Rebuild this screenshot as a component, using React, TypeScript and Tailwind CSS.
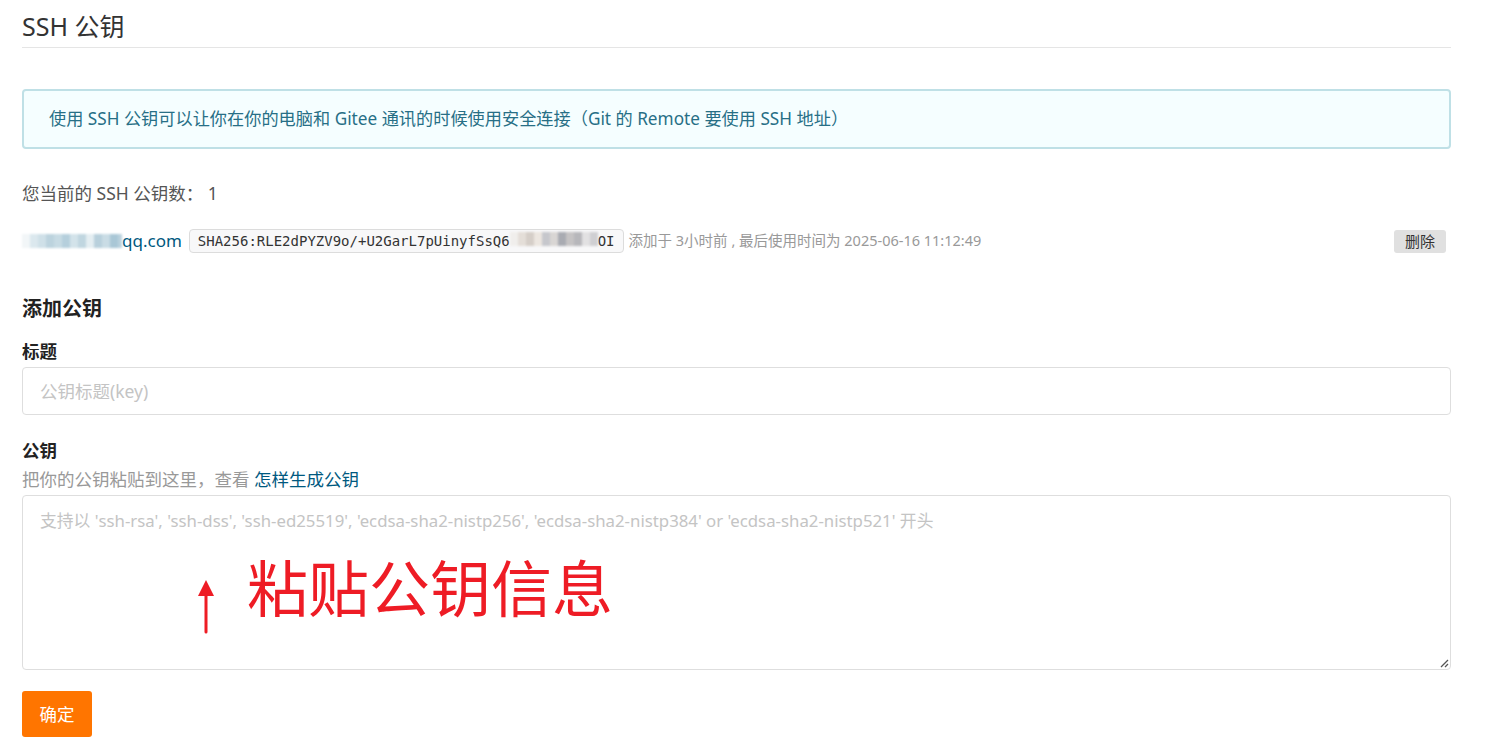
import React from "react";

const font = { fontFamily: '"Noto Sans", "Noto Sans CJK SC", sans-serif' };

function Mosaic({ colors, h = 18 }: { colors: string[]; h?: number }) {
  return (
    <span className="inline-flex items-center">
      {colors.map((c, i) => (
        <span key={i} className="inline-block w-[8px] shrink-0" style={{ background: c, height: h }} />
      ))}
    </span>
  );
}

export default function App() {
  const emailColors = ["#f2f6f8", "#dbe8ee", "#cfe0e8", "#bcd3de", "#c7dbe4", "#b5cfdc", "#d3e3ea", "#c0d6e0", "#e4eef2", "#b8d0dc", "#c9dce5", "#a9c7d6", "#bad2de"];
  const hashColors = ["#f0eeec", "#e4ded8", "#d5cec8", "#ece6e0", "#c6c7cc", "#d9d6d4", "#a9abb2", "#c5c3c4", "#b7b7bb", "#e2e1e2", "#cfcfd2"];
  return (
    <div className="w-[1499px] h-[753px] bg-white text-[#333]" style={font}>
      <div className="ml-[22px] w-[1429px]">
        <div className="pt-[10px] pb-[4px] border-b border-[#e5e5e5]">
          <h2 className="text-[25px] leading-[33px] text-[#333]">SSH 公钥</h2>
        </div>

        <div className="mt-[41px] h-[60px] flex items-center px-[25px] bg-[#f5feff] border-2 border-[#bfe0e6] rounded-[4px] text-[17.2px] text-[#276f86]">
          使用 SSH 公钥可以让你在你的电脑和 Gitee 通讯的时候使用安全连接（Git 的 Remote 要使用 SSH 地址）
        </div>

        <div className="mt-[32px] text-[17.5px] leading-[24px] text-[#555]">您当前的 SSH 公钥数：&nbsp;1</div>

        <div className="mt-[24px] flex items-center h-[24px]">
          <span className="inline-flex items-center text-[17px] text-[#005980]">
            <span className="blur-[1px] w-[100px] overflow-hidden inline-flex"><Mosaic colors={emailColors} h={14} /></span>
            <span>qq.com</span>
          </span>
          <span
            className="ml-[7px] inline-flex items-center h-[24px] px-[8px] bg-[#f8f8f9] border border-[#dcdcdc] rounded-[4px] text-[14px] text-[#333]"
            style={{ fontFamily: '"DejaVu Sans Mono", monospace' }}
          >
            SHA256:RLE2dPYZV9o/+U2GarL7pUinyfSsQ6
            <span className="blur-[1px]"><Mosaic colors={hashColors} h={14} /></span>
            OI
          </span>
          <span className="ml-[5px] text-[14.5px] text-[#999]">添加于 3小时前 , 最后使用时间为 2025-06-16 11:12:49</span>
          <button className="ml-auto mr-[5px] h-[23px] px-[11px] bg-[#e0e0e0] rounded-[3px] text-[15px] leading-[23px] text-[#333]">删除</button>
        </div>

        <div className="mt-[44px] text-[20px] leading-[24px] font-bold text-[#222]">添加公钥</div>
        <div className="mt-[20px] text-[17.5px] leading-[20px] font-bold text-[#222]">标题</div>
        <div className="mt-[6px] h-[48px] border border-[#dedede] rounded-[4px] flex items-center px-[17px] text-[17.5px] text-[#c4c4c4]">
          公钥标题(key)
        </div>

        <div className="mt-[25px] text-[17.5px] leading-[20px] font-bold text-[#222]">公钥</div>
        <div className="mt-[9px] text-[17.5px] leading-[20px] text-[#999]">
          把你的公钥粘贴到这里，查看 <span className="text-[#005980]">怎样生成公钥</span>
        </div>
        <div className="relative mt-[6px] h-[175px] border border-[#dedede] rounded-[4px] px-[17px] pt-[12px] text-[16.8px] text-[#c4c4c4]">
          支持以 'ssh-rsa', 'ssh-dss', 'ssh-ed25519', 'ecdsa-sha2-nistp256', 'ecdsa-sha2-nistp384' or 'ecdsa-sha2-nistp521' 开头
          <svg className="absolute right-[1px] bottom-[1px]" width="10" height="10" viewBox="0 0 10 10">
            <path d="M9 2 L2 9 M9 6 L6 9" stroke="#555" strokeWidth="1.3" />
          </svg>
          <div className="absolute left-[172px] top-[50px] flex items-end">
            <svg width="22" height="60" viewBox="0 0 22 60" className="mb-[-8px]">
              <path d="M11 58 L11 12" stroke="#ee1c25" strokeWidth="3" strokeLinecap="round" />
              <path d="M3 22 L11 6 L19 22 Z" fill="#ee1c25" />
            </svg>
            <span className="ml-[30px] text-[61px] leading-[80px] text-[#ee1c25]" style={{ fontFamily: '"Noto Sans CJK SC", sans-serif' }}>
              粘贴公钥信息
            </span>
          </div>
        </div>

        <button className="mt-[21px] w-[70px] h-[46px] bg-[#ff7500] rounded-[3px] text-white text-[17.5px]">确定</button>
      </div>
    </div>
  );
}
